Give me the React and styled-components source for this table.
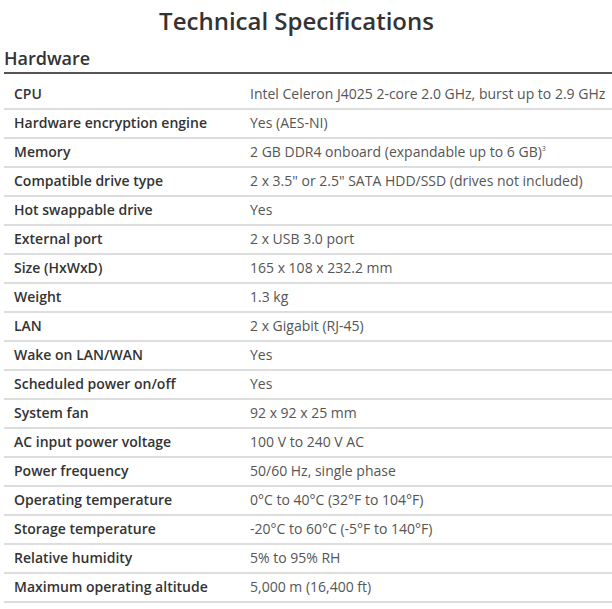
import React from "react";
import styled, { createGlobalStyle } from "styled-components";

const GlobalStyle = createGlobalStyle`
  body {
    margin: 0;
    background: #fff;
    font-family: "Open Sans", "Noto Sans", sans-serif;
    color: #333;
  }
`;

const Page = styled.div`
  padding: 5px 0 0 4px;
`;

const Title = styled.h1`
  margin: 0;
  padding-right: 23px;
  font-size: 24px;
  line-height: 32px;
  font-weight: 600;
  text-align: center;
  color: #333;
`;

const SectionTitle = styled.h2`
  margin: 9px 0 0;
  padding-bottom: 2px;
  font-size: 18px;
  line-height: 24px;
  font-weight: 600;
  color: #333;
  border-bottom: 2px solid #555;
`;

const SpecTable = styled.div`
  display: grid;
  grid-template-columns: 236px 1fr;
  padding-top: 7px;
`;

const Cell = styled.div`
  padding: 4px 10px 6px;
  font-size: 14px;
  line-height: 17px;
  white-space: nowrap;
  border-bottom: 2px solid #ddd;
  font-weight: ${(p) => (p.$label ? 600 : 400)};
  color: ${(p) => (p.$label ? "#333" : "#555")};
`;

const Sup = styled.sup`
  font-size: 7px;
  line-height: 0;
`;

const specs = [
  ["CPU", "Intel Celeron J4025 2-core 2.0 GHz, burst up to 2.9 GHz"],
  ["Hardware encryption engine", "Yes (AES-NI)"],
  [
    "Memory",
    <>
      2 GB DDR4 onboard (expandable up to 6 GB)<Sup>3</Sup>
    </>,
  ],
  ["Compatible drive type", '2 x 3.5" or 2.5" SATA HDD/SSD (drives not included)'],
  ["Hot swappable drive", "Yes"],
  ["External port", "2 x USB 3.0 port"],
  ["Size (HxWxD)", "165 x 108 x 232.2 mm"],
  ["Weight", "1.3 kg"],
  ["LAN", "2 x Gigabit (RJ-45)"],
  ["Wake on LAN/WAN", "Yes"],
  ["Scheduled power on/off", "Yes"],
  ["System fan", "92 x 92 x 25 mm"],
  ["AC input power voltage", "100 V to 240 V AC"],
  ["Power frequency", "50/60 Hz, single phase"],
  ["Operating temperature", "0°C to 40°C (32°F to 104°F)"],
  ["Storage temperature", "-20°C to 60°C (-5°F to 140°F)"],
  ["Relative humidity", "5% to 95% RH"],
  ["Maximum operating altitude", "5,000 m (16,400 ft)"],
];

export default function App() {
  return (
    <Page>
      <GlobalStyle />
      <Title>Technical Specifications</Title>
      <SectionTitle>Hardware</SectionTitle>
      <SpecTable>
        {specs.map(([label, value], i) => (
          <React.Fragment key={i}>
            <Cell $label>{label}</Cell>
            <Cell>{value}</Cell>
          </React.Fragment>
        ))}
      </SpecTable>
    </Page>
  );
}
